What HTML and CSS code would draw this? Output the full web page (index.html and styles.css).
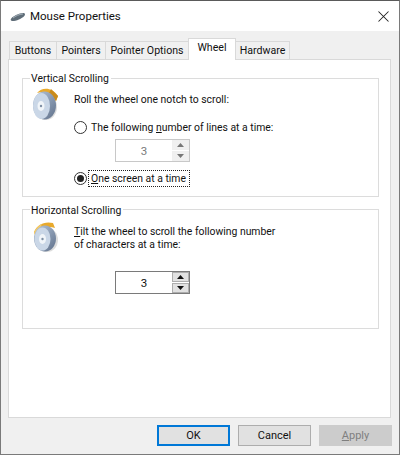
FILE: index.html
```html
<!DOCTYPE html>
<html lang="en">
<head>
<meta charset="utf-8">
<title>Mouse Properties</title>
<link rel="stylesheet" href="styles.css">
</head>
<body>
<div class="window">
  <header class="titlebar">
    <svg class="app-icon" width="16" height="10" viewBox="0 0 16 10"><path d="M.7 7.500 C1 6 3 4.500 6 3 C9 1.500 12 .8 13.500 1 C15 1.200 15.300 2 14.800 3.200 C14 5 8 8.800 4 9 C2 9.100 .5 8.600 .7 7.500Z" fill="#5f6d78"/><path d="M3 6 C5.500 4 9 2.300 13 2" stroke="#a5b1ba" fill="none"/></svg>
    <span class="title">Mouse Properties</span>
    <svg class="close" width="11" height="11" viewBox="0 0 11 11"><path d="M.5 .5 10.500 10.500M10.500 .5 .5 10.500" stroke="#222" stroke-width="1.050" fill="none"/></svg>
  </header>
  <main class="body">
    <nav class="tabs">
      <span class="tab t1">Buttons</span>
      <span class="tab t2">Pointers</span>
      <span class="tab t3">Pointer Options</span>
      <span class="tab active t4">Wheel</span>
      <span class="tab t5">Hardware</span>
    </nav>
    <section class="panel">
      <fieldset class="group vertical">
        <legend>Vertical Scrolling</legend>
        <div class="row">
          <svg class="wheel wheel-v" width="28" height="33" viewBox="0 0 28 33">
            <defs><linearGradient id="g1" x1="0" y1="0" x2="1" y2="1"><stop offset="0" stop-color="#b8c8dc"/><stop offset="1" stop-color="#5f708a"/></linearGradient></defs>
            <ellipse cx="14" cy="19" rx="11" ry="13" fill="#c4c4c4" opacity=".6"/>
            <path d="M5 5 C10 -1 20 -1 26 8 L24 13 C18 5 11 3 5 5Z" fill="#e8a92c"/>
            <path d="M19 1 L26 8 L24 13 L17 5Z" fill="#c98b1c"/>
            <ellipse cx="12.500" cy="17.500" rx="11.500" ry="14" fill="url(#g1)"/>
            <ellipse cx="9.500" cy="18" rx="8.500" ry="13" fill="#cad7e7"/>
            <ellipse cx="9" cy="18" rx="3.500" ry="5" fill="#f1f5f9"/>
            <circle cx="9" cy="18" r="1.200" fill="#7f90a5"/>
          </svg>
          <div class="copy">
            <p class="line">Roll the wheel one notch to scroll:</p>
            <label class="radio-row first"><span class="radio"></span><span>The following <u>n</u>umber of lines at a time:</span></label>
            <div class="spin disabled">
              <span class="spin-value">3</span>
              <span class="spin-btns"><span class="spin-btn"><svg width="7" height="4" viewBox="0 0 7 4"><path d="M3.500 0 7 4H0Z"/></svg></span><span class="spin-btn"><svg width="7" height="4" viewBox="0 0 7 4"><path d="M0 0H7L3.500 4Z"/></svg></span></span>
            </div>
            <label class="radio-row second"><span class="radio checked"></span><span class="focus"><u>O</u>ne screen at a time</span></label>
          </div>
        </div>
      </fieldset>
      <fieldset class="group horizontal">
        <legend>Horizontal Scrolling</legend>
        <div class="row">
          <svg class="wheel wheel-h" width="28" height="30" viewBox="0 0 28 30">
            <ellipse cx="15" cy="18" rx="11" ry="12" fill="#c4c4c4" opacity=".6"/>
            <path d="M2 10 C5 3 12 -1 21 1 L23 6 C15 3 8 6 4 16Z" fill="#e8a92c"/>
            <path d="M2 10 C4 6 7 3 10 2 L7 9 L4 16Z" fill="#f3cb6c"/>
            <ellipse cx="13" cy="16.500" rx="11" ry="13" fill="url(#g1)"/>
            <ellipse cx="10.500" cy="17" rx="8" ry="11.500" fill="#cad7e7"/>
            <ellipse cx="10.500" cy="17" rx="3.500" ry="5" fill="#f1f5f9"/>
            <circle cx="10.500" cy="17" r="1.200" fill="#7f90a5"/>
          </svg>
          <div class="copy">
            <p class="para"><u>T</u>ilt the wheel to scroll the following number<br>of characters at a time:</p>
            <div class="spin enabled">
              <span class="spin-value">3</span>
              <span class="spin-btns"><span class="spin-btn"><svg width="7" height="4" viewBox="0 0 7 4"><path d="M3.500 0 7 4H0Z"/></svg></span><span class="spin-btn"><svg width="7" height="4" viewBox="0 0 7 4"><path d="M0 0H7L3.500 4Z"/></svg></span></span>
            </div>
          </div>
        </div>
      </fieldset>
    </section>
    <footer class="actions">
      <button class="btn default">OK</button>
      <button class="btn">Cancel</button>
      <button class="btn off" disabled><u>A</u>pply</button>
    </footer>
  </main>
</div>
</body>
</html>
```
FILE: styles.css
```css
* { box-sizing: border-box; }
html, body { margin: 0; padding: 0; }
body { width: 400px; height: 455px; overflow: hidden; background: #f0f0f0; font-family: Roboto, "Liberation Sans", sans-serif; font-size: 10.4px; color: #111; }
.window { width: 400px; height: 455px; border: 1px solid #7a7a7a; border-top-color: #5a5a5a; display: flex; flex-direction: column; }
.titlebar { height: 30px; background: #fff; display: flex; align-items: center; padding-left: 9px; flex: none; }
.app-icon { margin-right: 4px; margin-top: 1px; }
.title { font-size: 11.500px; flex: 1; color: #111; }
.close { margin-right: 10px; }
.body { flex: 1; background: #f0f0f0; padding: 7px 7px 0 7px; display: flex; flex-direction: column; }
.tabs { height: 21px; display: flex; align-items: flex-end; padding-left: 1px; position: relative; z-index: 1; flex: none; }
.tab { height: 18px; background: #f0f0f0; border: 1px solid #d9d9d9; border-bottom: 0; line-height: 17px; font-size: 10.600px; text-align: center; margin-left: -1px; white-space: nowrap; }
.t1 { width: 48px; margin-left: 0; }
.t2 { width: 50px; }
.t3 { width: 84px; }
.t4 { width: 48px; }
.t5 { width: 55px; }
.tab.active { height: 22px; background: #fff; margin-bottom: -1px; line-height: 18px; position: relative; z-index: 2; }
.panel { height: 359px; margin-right: 1px; background: #fff; border: 1px solid #d9d9d9; padding: 7px 11px 0 13px; flex: none; }
.group { margin: 0; padding: 0 10px 0 9px; border: 1px solid #dcdcdc; min-inline-size: 0; }
.group legend { padding: 0 2px 0 1px; margin-left: -2px; line-height: 16px; position: relative; top: 1px; }
.horizontal legend { top: 2px; }
.vertical { height: 127px; margin-top: 3px; }
.horizontal { height: 128px; margin-top: 4px; }
.row { display: flex; align-items: flex-start; }
.wheel { flex: none; margin-right: 14px; }
.wheel-v { margin-top: 2px; }
.wheel-h { margin-top: 5px; }
.copy { flex: 1; }
.line { margin: 6px 0 0; line-height: 16px; }
.para { margin: 8px 0 0; line-height: 13px; }
.radio-row { display: flex; align-items: center; height: 16px; }
.first { margin-top: 11px; }
.second { margin-top: 8px; }
.radio { width: 13px; height: 13px; border: 1px solid #333; border-radius: 50%; background: #fff; margin-right: 4px; flex: none; display: flex; align-items: center; justify-content: center; }
.checked::after { content: ""; width: 7px; height: 7px; border-radius: 50%; background: #222; }
.focus { outline: 1px dotted #222; padding: 0 2px; height: 15px; line-height: 15px; margin-left: -2px; width: 100px; white-space: nowrap; }
.spin { width: 75px; height: 23px; margin-left: 41px; border: 1px solid #adadad; background: #fff; display: flex; align-items: center; }
.disabled { margin-top: 4px; border-color: #c8c8c8; color: #7a7a7a; }
.enabled { margin-top: 20px; border-color: #7a7a7a; }
.spin-value { flex: 1; text-align: center; font-size: 11.500px; }
.spin-btns { width: 17px; height: 21px; display: flex; flex-direction: column; gap: 1px; }
.spin-btn { flex: 1; background: #f0f0f0; display: flex; align-items: center; justify-content: center; border: 1px solid #e3e3e3; }
.disabled .spin-btn { border-color: #efefef; }
.disabled .spin-btn svg { fill: #777; }
.enabled .spin-btn { background: #e1e1e1; border-color: #adadad; }
.enabled .spin-btn svg { fill: #111; }
.actions { display: flex; justify-content: flex-end; gap: 8px; padding: 7px 0 0; }
.btn { width: 73px; height: 21px; padding: 0; background: #e1e1e1; border: 1px solid #adadad; font: inherit; font-size: 11px; color: #111; }
.default { border: 2px solid #0078d7; }
.off { background: #cccccc; border-color: #cccccc; color: #7f7f7f; }
```
